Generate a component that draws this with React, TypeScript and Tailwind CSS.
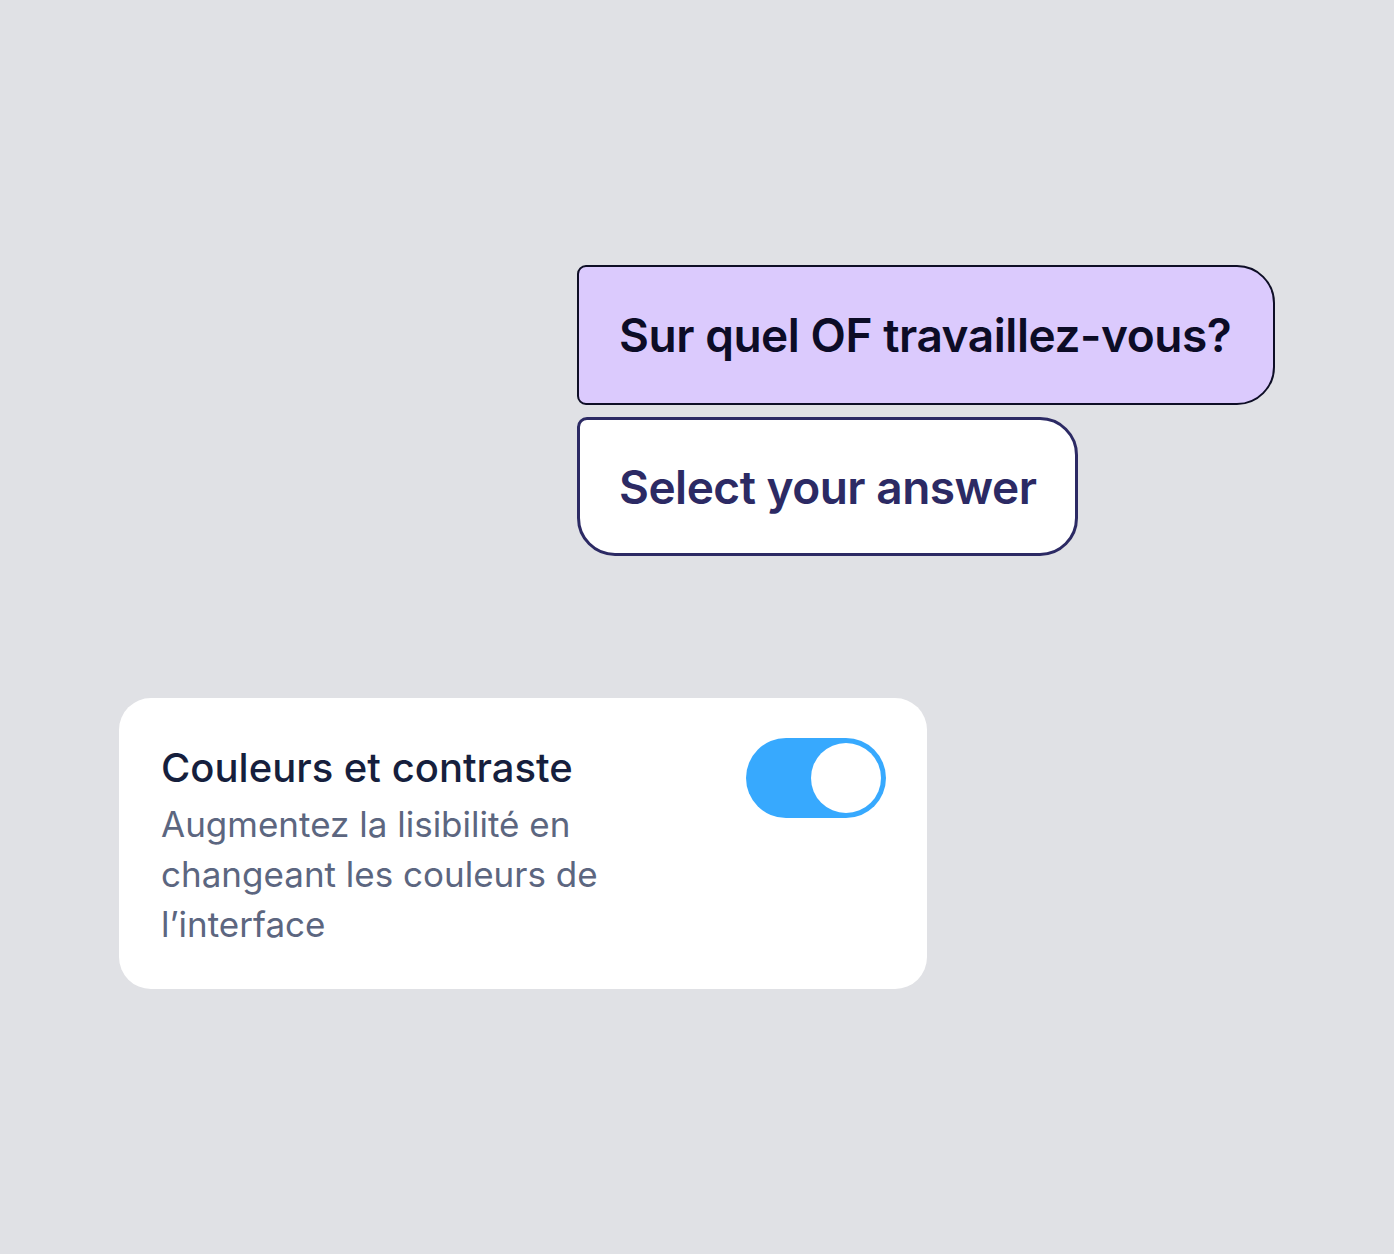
export default function App() {
  return (
    <main
      className="min-h-[1254px] w-full bg-[#e0e1e5] pt-[265px]"
      style={{ fontFamily: "Inter, 'Noto Sans', sans-serif" }}
    >
      <div className="ml-[577px] flex flex-col items-start gap-[12px]">
        <div className="flex h-[140px] items-center rounded-tl-[9px] rounded-bl-[9px] rounded-tr-[38px] rounded-br-[38px] border-2 border-[#0e0e26] bg-[#dbcafd] pl-[40px] pr-[42px]">
          <span className="text-[46px] font-semibold leading-none tracking-[-0.45px] text-[#0c0c26]">
            Sur quel OF travaillez-vous?
          </span>
        </div>
        <div className="flex h-[139px] items-center rounded-tl-[10px] rounded-bl-[38px] rounded-tr-[38px] rounded-br-[38px] border-[3px] border-[#2c2a64] bg-white pl-[39px] pr-[39px]">
          <span className="text-[46px] font-semibold leading-none tracking-[-0.5px] text-[#2c2a64]">
            Select your answer
          </span>
        </div>
      </div>

      <section className="ml-[119px] mt-[142px] flex w-[808px] items-start justify-between rounded-[32px] bg-white pb-[40px] pl-[42px] pr-[41px] pt-[46px]">
        <div className="max-w-[470px]">
          <h2 className="text-[40px] font-medium leading-[48px] text-[#161f3d]">
            Couleurs et contraste
          </h2>
          <p className="mt-[7px] text-[35px] font-normal leading-[50px] text-[#5c6680]">
            Augmentez la lisibilité en changeant les couleurs de l’interface
          </p>
        </div>
        <button
          type="button"
          aria-pressed="true"
          className="-mt-[6px] flex h-[80px] w-[140px] items-center justify-end rounded-full bg-[#37a9fe] pr-[5px]"
        >
          <span className="h-[70px] w-[70px] rounded-full bg-white" />
        </button>
      </section>
    </main>
  );
}
